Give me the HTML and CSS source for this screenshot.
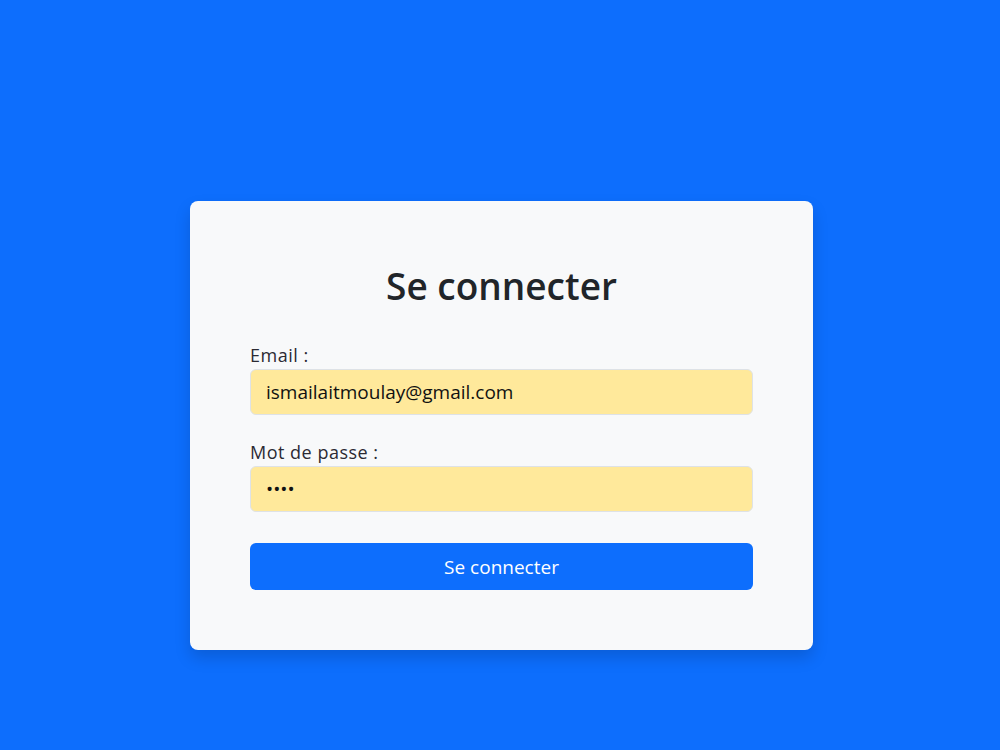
FILE: index.html
```html
<!DOCTYPE html>
<html lang="fr">
<head>
<meta charset="utf-8">
<title>Se connecter</title>
<link rel="stylesheet" href="styles.css">
</head>
<body>
<main class="card">
  <h1 class="title">Se connecter</h1>
  <form class="form">
    <div class="field">
      <label class="label" for="email">Email :</label>
      <input class="input" id="email" type="email" value="ismailaitmoulay@gmail.com">
    </div>
    <div class="field">
      <label class="label" for="pwd">Mot de passe :</label>
      <input class="input" id="pwd" type="password" value="1234">
    </div>
    <button class="btn" type="button">Se connecter</button>
  </form>
</main>
</body>
</html>
```
FILE: styles.css
```css
* { box-sizing: border-box; }
html, body { margin: 0; }
body {
  background: #0d6efd;
  font-family: "Open Sans", "Noto Sans", sans-serif;
  color: #212529;
  height: 750px;
  padding: 201px 0 0 3px;
}
.card {
  width: 623px;
  margin: 0 auto;
  background: #f8f9fa;
  border-radius: 8px;
  padding: 60px 60px 60px 60px;
  box-shadow: 0 8px 16px rgba(0, 0, 0, 0.15);
}
.title {
  margin: 0 0 35px;
  padding-top: 3px;
  font-size: 37px;
  line-height: 44px;
  font-weight: 600;
  text-align: center;
  color: #212529;
}
.form { display: flex; flex-direction: column; }
.field { display: flex; flex-direction: column; gap: 2px; margin-bottom: 25px; }
.field + .btn { margin-top: 6px; }
.label {
  font-size: 18px;
  line-height: 24px;
  letter-spacing: 0.5px;
  color: #2b2a33;
}
.input {
  height: 46px;
  width: 100%;
  padding: 0 15px;
  border: 1px solid #dee2e6;
  border-radius: 6px;
  background: #ffe99b;
  font-family: inherit;
  font-size: 19px;
  color: #111;
  outline: none;
}
.btn {
  height: 47px;
  width: 100%;
  border: 0;
  border-radius: 6px;
  background: #0d6efd;
  color: #fff;
  font-family: inherit;
  font-size: 19px;
  cursor: pointer;
}
```
